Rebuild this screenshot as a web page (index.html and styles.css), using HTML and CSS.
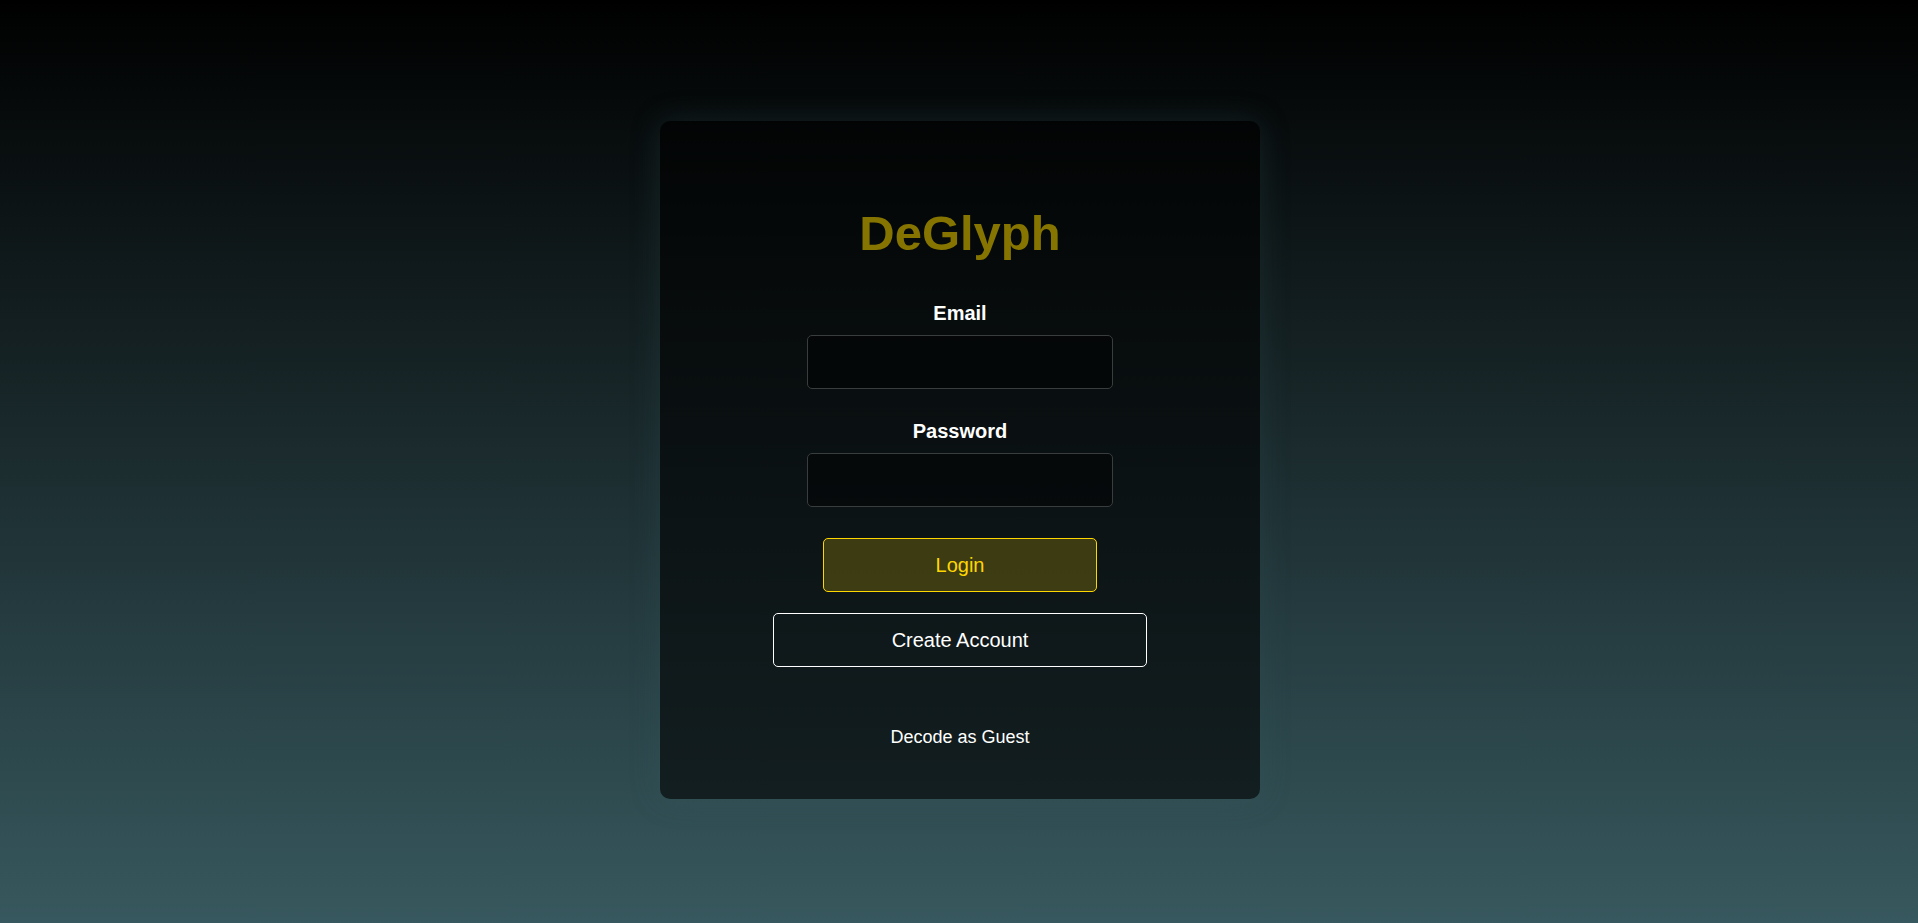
FILE: index.html
```html
<!DOCTYPE html>
<html lang="en">
<head>
<meta charset="utf-8">
<title>DeGlyph</title>
<link rel="stylesheet" href="styles.css">
</head>
<body>
<main class="page">
  <section class="card">
    <h1 class="title">DeGlyph</h1>
    <form class="form">
      <div class="field">
        <label class="label" for="email">Email</label>
        <input class="input" id="email" type="email">
      </div>
      <div class="field">
        <label class="label" for="password">Password</label>
        <input class="input" id="password" type="password">
      </div>
      <button type="button" class="btn btn-login">Login</button>
      <button type="button" class="btn btn-create">Create Account</button>
    </form>
    <a class="guest" href="#">Decode as Guest</a>
  </section>
</main>
</body>
</html>
```
FILE: styles.css
```css
html, body {
  margin: 0;
  padding: 0;
  height: 100%;
}
body {
  background: linear-gradient(to bottom, #000000 0%, #37585e 100%);
  font-family: "Liberation Sans", Arial, sans-serif;
  color: #ffffff;
}
.page {
  min-height: 100vh;
  box-sizing: border-box;
  padding: 0 0 3px 2px;
  display: flex;
  align-items: center;
  justify-content: center;
}
.card {
  width: 600px;
  box-sizing: border-box;
  padding: 85px 0 51px;
  background: rgba(0, 0, 0, 0.6);
  border-radius: 10px;
  box-shadow: 0 0 30px rgba(60, 100, 105, 0.25);
  display: flex;
  flex-direction: column;
  align-items: center;
}
.title {
  margin: 0;
  font-size: 49px;
  line-height: 55px;
  font-weight: bold;
  color: #857400;
}
.form {
  margin-top: 39px;
  display: flex;
  flex-direction: column;
  align-items: center;
}
.field {
  display: flex;
  flex-direction: column;
  align-items: center;
  margin-bottom: 29px;
}
.field + .field {
  margin-bottom: 31px;
}
.label {
  font-size: 20px;
  line-height: 23px;
  font-weight: bold;
  padding-top: 2px;
  margin-bottom: 10px;
}
.input {
  width: 306px;
  height: 54px;
  box-sizing: border-box;
  background: rgba(0, 0, 0, 0.45);
  border: 1px solid #3a3d3e;
  border-radius: 5px;
  color: #ffffff;
  font-size: 18px;
  padding: 0 12px;
  outline: none;
}
.btn {
  height: 54px;
  box-sizing: border-box;
  font-family: "Liberation Sans", Arial, sans-serif;
  font-size: 20px;
  border-radius: 5px;
  cursor: pointer;
}
.btn-login {
  width: 274px;
  background: rgba(255, 215, 0, 0.2);
  border: 1px solid #ffd700;
  color: #ffd700;
}
.btn-create {
  width: 374px;
  margin-top: 21px;
  background: transparent;
  border: 1.5px solid #ffffff;
  color: #ffffff;
}
.guest {
  margin-top: 60px;
  font-size: 18px;
  line-height: 21px;
  color: #ffffff;
  text-decoration: none;
}
```
